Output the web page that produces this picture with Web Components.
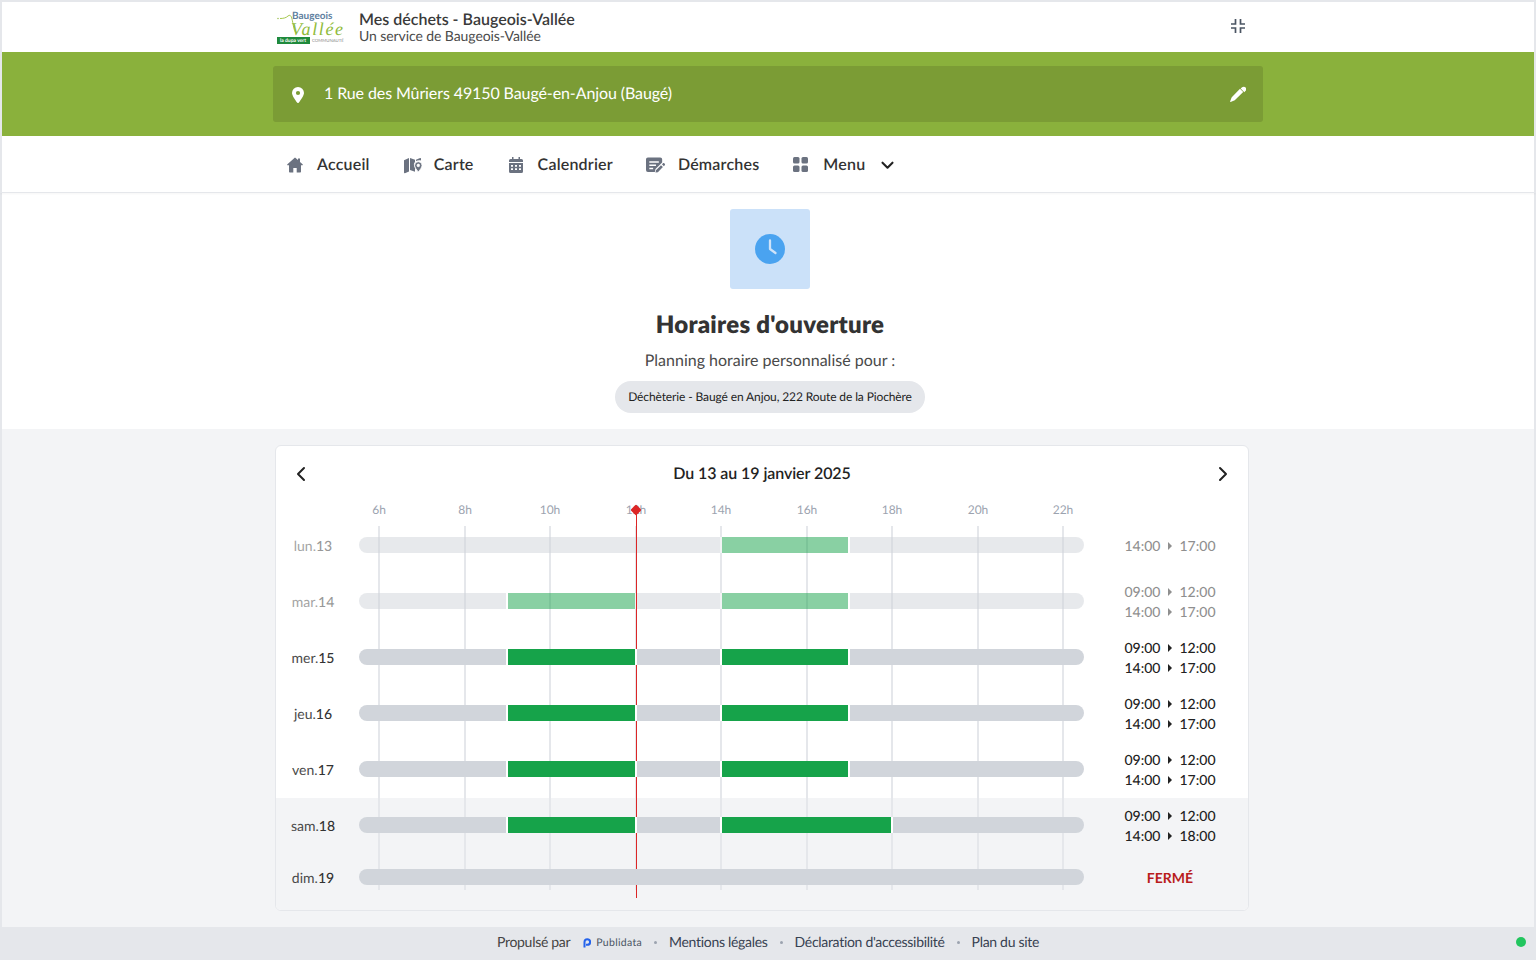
<!DOCTYPE html>
<html lang="fr"><head><meta charset="utf-8"><title>Horaires d'ouverture</title>
<style>
html,body{margin:0;padding:0;height:100%}
body{font-family:Lato,"Liberation Sans",sans-serif;color:#333;background:#f3f4f6;text-rendering:geometricPrecision}
page-shell{display:flex;flex-direction:column;height:960px;overflow:hidden;box-sizing:border-box}
</style></head><body>
<page-shell>
  <app-header></app-header>
  <address-band>1 Rue des Mûriers 49150 Baugé-en-Anjou (Baugé)</address-band>
  <nav-bar></nav-bar>
  <hours-hero></hours-hero>
  <schedule-section></schedule-section>
  <site-footer></site-footer>
</page-shell>
<script>
const ICONS={
 home:'<svg viewBox="0 0 16 16" width="16" height="16"><path fill="currentColor" d="M8 .5 .4 7.200c-.4.4-.2 1 .4 1H2V14.500c0 .6.5 1 1 1H6.300V11h3.400v4.500H13c.6 0 1-.4 1-1V8.200h1.200c.6 0 .8-.6.4-1L13 4.900V1.500h-2v1.600z"/></svg>',
 map:'<svg viewBox="0 0 18 18" width="18" height="18"><path fill="currentColor" d="M0 4.300 5 2v13.600L.9 17.200c-.4.2-.9-.1-.9-.6zM6 2l5 1.700v2.200c-.9.9-1.300 2.100-1 3.300.3 1.200.6 2 1 2.800v3.800l-5-1.700zM12 3.700 16.100 2c.4-.2.900.1.900.6v2c-1.500-.5-3.300-.3-5 .5z"/><path fill-rule="evenodd" fill="currentColor" stroke="#fff" stroke-width=".8" d="M14.300 5.700a3.700 3.700 0 0 1 3.700 3.700c0 1.800-2.200 4.700-3 5.800-.3.4-1 .4-1.300 0-.8-1.100-3.100-4-3.100-5.800a3.700 3.700 0 0 1 3.700-3.700zm0 2.400a1.300 1.300 0 1 0 0 2.600 1.300 1.300 0 0 0 0-2.600z"/></svg>',
 cal:'<svg viewBox="0 0 14 16" width="14" height="16"><path fill-rule="evenodd" fill="currentColor" d="M3 0h1.500v2h5V0H11v2h1.500A1.500 1.500 0 0 1 14 3.500V5H0V3.500A1.500 1.500 0 0 1 1.500 2H3zM0 6h14v8.500a1.500 1.500 0 0 1-1.500 1.500h-11A1.500 1.500 0 0 1 0 14.500zm2 2v1.700h2V8zm4 0v1.700h2V8zm4 0v1.700h2V8zm-8 3.300V13h2v-1.700zm4 0V13h2v-1.700zm4 0V13h2v-1.700z"/></svg>',
 doc:'<svg viewBox="0 0 20 16" width="19" height="16"><path fill-rule="evenodd" fill="currentColor" d="M2 0h13a2 2 0 0 1 2 2v3.300l-7 7-.7 3H2a2 2 0 0 1-2-2V2a2 2 0 0 1 2-2zm1.500 4v1.500h10V4zm0 3.500V9h7V7.500zm0 3.500v1.500h4V11z"/><path fill="currentColor" d="M17.700 6.300c.5-.5 1.200-.5 1.700 0l.3.300c.5.500.5 1.200 0 1.700l-.9.900-2-2zM15.800 8.200l2 2-5.300 5.300-2.500.5.500-2.500z"/></svg>',
 grid:'<svg viewBox="0 0 15 15" width="15" height="15"><g fill="currentColor"><rect width="6.500" height="6.500" rx="1.500"/><rect x="8.500" width="6.500" height="6.500" rx="1.500"/><rect y="8.500" width="6.500" height="6.500" rx="1.500"/><rect x="8.500" y="8.500" width="6.500" height="6.500" rx="1.500"/></g></svg>',
 down:'<svg viewBox="0 0 13 9" width="13" height="9"><path fill="none" stroke="currentColor" stroke-width="2.100" stroke-linecap="round" stroke-linejoin="round" d="M1.500 1.700 6.500 6.700l5-5"/></svg>',
 compress:'<svg viewBox="0 0 14 14" width="14" height="14"><path fill="none" stroke="currentColor" stroke-width="1.700" d="M4.500 0v5H0M9.500 0v5H14M4.500 14V9H0M9.500 14V9H14"/></svg>',
 pin:'<svg viewBox="0 0 12 16" width="12" height="16"><path fill-rule="evenodd" fill="currentColor" d="M6 0a6 6 0 0 1 6 6c0 2.700-3.600 7.500-5.100 9.500a1.100 1.100 0 0 1-1.800 0C3.600 13.500 0 8.700 0 6a6 6 0 0 1 6-6zm0 3.900a2.100 2.100 0 1 0 0 4.200 2.100 2.100 0 0 0 0-4.200z"/></svg>',
 pen:'<svg viewBox="0 0 16 16" width="16" height="16"><path fill="currentColor" d="M11.800 1.500c1.100-1.100 2.800-1.100 3.800-.1 1 1 .9 2.600-.2 3.700l-1.100 1.100-3.600-3.600zM10 2.800l3.200 3.200L5 14c-.4.4-.9.7-1.400.8l-3 1.100c-.3.1-.6-.2-.5-.5l1.100-3c.1-.5.400-1 .8-1.400z"/></svg>',
 left:'<svg viewBox="0 0 10 16" width="10" height="16"><path fill="none" stroke="currentColor" stroke-width="2" stroke-linecap="round" stroke-linejoin="round" d="M8 2 2 8l6 6"/></svg>',
 right:'<svg viewBox="0 0 10 16" width="10" height="16"><path fill="none" stroke="currentColor" stroke-width="2" stroke-linecap="round" stroke-linejoin="round" d="m2 2 6 6-6 6"/></svg>',
 clock:'<svg viewBox="0 0 30 30" width="30" height="30"><circle cx="15" cy="15" r="15" fill="#4aa3f0"/><path fill="none" stroke="#cfe3f9" stroke-width="2.300" stroke-linecap="round" stroke-linejoin="round" d="M15 6.500V15l5.500 4"/></svg>'
};
function def(name,css,html){
  customElements.define(name,class extends HTMLElement{
    constructor(){super();const r=this.attachShadow({mode:'open'});
      r.innerHTML='<style>'+css+'</style>'+(typeof html==='function'?html(this):html);}
  });
}
def('app-header',`
 :host{display:block;background:#fff;border-top:2px solid #e5e7eb;border-left:2px solid #e5e7eb;border-right:2px solid #e5e7eb}
 .in{width:990px;margin:0 auto;height:50px;display:flex;align-items:center;box-sizing:border-box;padding-left:4px}
 svg.logo{width:69px;height:36px;flex:none;margin-right:13px}
 .t{flex:1;color:#333}
 .a{font-size:16px;font-weight:600;line-height:18px;color:#3a3a3a}
 .b{font-size:14px;line-height:14px;color:#4a4a4a;letter-spacing:-.08px}
 .c{color:#4b5563;display:flex;margin:0 18px 2px 0}
`,()=>`<div class="in">
 <svg class="logo" viewBox="0 0 69 36" aria-label="Baugeois-Vallée">
  <circle cx="1" cy="9.500" r=".7" fill="#8fb63a"/>
  <path fill="none" stroke="#9cc23c" stroke-width=".9" d="M3 9.500c3 0 6-.5 8-2.500 3-2.500 4 2 5 8 1 5 2 9 3.500 8"/>
  <text x="15" y="9.500" font-family="Lato,sans-serif" font-size="10" font-weight="700" fill="#5f7f9f">Baugeois</text>
  <text x="14" y="25.500" font-family="'Liberation Serif',serif" font-style="italic" font-size="18" letter-spacing="1.600" fill="#8fbb3a">Vallée</text>
  <rect x="0" y="28" width="33" height="7" fill="#1f8a3c"/>
  <text x="3" y="33.400" font-family="Lato,sans-serif" font-size="5" font-weight="700" fill="#fff">la dupa vert</text>
  <text x="35" y="33.400" font-family="Lato,sans-serif" font-size="4.300" fill="#888">COMMUNAUTÉ</text>
 </svg>
 <div class="t"><div class="a">Mes déchets - Baugeois-Vallée</div><div class="b">Un service de Baugeois-Vallée</div></div>
 <div class="c">${ICONS.compress}</div></div>`);
def('address-band',`
 :host{display:block;background:#8ab13c;padding:14px 0;border-left:2px solid #e5e7eb;border-right:2px solid #e5e7eb}
 .box{width:990px;height:56px;margin:0 auto;background:#7b9c35;border-radius:3px;display:flex;align-items:center;color:#fff;box-sizing:border-box;padding:0 17px 0 19px;font-size:16px}
 .p{display:flex;margin-right:20px;margin-top:1px}.s{flex:1;margin-top:-2px;letter-spacing:-.1px}.e{display:flex}
`,`<div class="box"><span class="p">${ICONS.pin}</span><span class="s"><slot></slot></span><span class="e">${ICONS.pen}</span></div>`);
def('nav-item',`
 :host{display:flex;align-items:center;font-size:16px;font-weight:600;letter-spacing:.2px;color:#333;margin-right:var(--m,34px)}
 .i{display:flex;justify-content:center;color:#6b7280;margin-right:var(--g,14px);margin-top:1px}
 .d{display:flex;margin-left:16px;color:#222;margin-top:2px}
`,h=>`<span class="i">${ICONS[h.getAttribute('icon')]}</span><span class="x"><slot></slot></span>${h.hasAttribute('drop')?`<span class="d">${ICONS.down}</span>`:''}`);
def('nav-bar',`
 :host{display:block;background:#fff;border-left:2px solid #e5e7eb;border-right:2px solid #e5e7eb;border-bottom:1px solid #e5e7eb;box-shadow:0 1px 2px rgba(0,0,0,.04);position:relative}
 .in{width:990px;height:56px;margin:0 auto;display:flex;align-items:center;box-sizing:border-box;padding-left:14px}
`,`<div class="in"><nav-item icon="home">Accueil</nav-item><nav-item icon="map" style="--g:12px;--m:35px">Carte</nav-item><nav-item icon="cal" style="--g:15px;--m:33px">Calendrier</nav-item><nav-item icon="doc" style="--g:13px">Démarches</nav-item><nav-item icon="grid" drop style="--g:15px">Menu</nav-item></div>`);
def('hours-hero',`
 :host{display:flex;flex-direction:column;align-items:center;background:#fff;padding:16px 0 16px 4px;border-left:2px solid #e5e7eb;border-right:2px solid #e5e7eb}
 .ic{width:80px;height:80px;background:#cbe1f9;border-radius:3px;display:flex;align-items:center;justify-content:center}
 h1{margin:20px 0 0;font-size:24px;line-height:32px;font-weight:800;letter-spacing:.25px;color:#333}
 p{margin:10px 0 0;font-size:16px;line-height:20px;color:#4a4a4a}
 .chip{margin-top:10px;height:32px;padding:0 13px;border-radius:16px;background:#e5e7eb;display:flex;align-items:center;font-size:12px;color:#222;letter-spacing:-.115px}
 .chip span{margin-top:-2px}
`,`<div class="ic">${ICONS.clock}</div><h1>Horaires d'ouverture</h1><p>Planning horaire personnalisé pour :</p><div class="chip"><span>Déchèterie - Baugé en Anjou, 222 Route de la Piochère</span></div>`);
const X=h=>379+(h-6)*42.75;
const START={9:508,14:722},END={12:635,17:848,18:891};
def('schedule-row',`
 :host{display:flex;align-items:center;height:var(--h,56px);box-sizing:border-box;font-size:14px}
 :host([past]) .w{opacity:.5}
 .w{display:flex;align-items:center;flex:1;height:100%;color:#222}
 .day{width:74px;text-align:center;margin-right:9px;color:#4a4a4a;flex:none}
 .day b{font-weight:500;color:#333}
 .bar{width:725px;height:16px;flex:none;display:flex;border-radius:8px;overflow:hidden;position:relative;z-index:1}
 .g{background:#d1d5db;flex:none}.g:last-child{flex:1}
 .o{background:#16a34a;flex:none}
 .gap{background:#fff;flex:none;width:2px}
 .h{flex:1;padding-left:8px;margin-top:2px;display:flex;flex-direction:column;align-items:center;line-height:20px;font-weight:500;color:#222}
 .l{display:flex;align-items:center}
 .l i{display:block;width:0;height:0;border-left:4.500px solid currentColor;border-top:4px solid transparent;border-bottom:4px solid transparent;margin:0 7.500px 0 7.500px}
 .f{color:#b91c1c;font-weight:700}
`,h=>{
  const segs=(h.getAttribute('segs')||'').split(',').filter(Boolean).map(s=>s.split('-').map(Number));
  let out='',cur=359;
  for(const [a,b] of segs){
    out+=`<span class="g" style="width:${START[a]-2-cur}px"></span><span class="gap"></span><span class="o" style="width:${END[b]-START[a]}px"></span><span class="gap"></span>`;
    cur=END[b]+2;
  }
  out+='<span class="g"></span>';
  const hours=h.getAttribute('hours');
  const right=hours?hours.split(',').map(s=>{const [a,b]=s.split('-');return `<div class="l">${a}<i></i>${b}</div>`}).join(''):'<div class="f">FERMÉ</div>';
  const d=h.getAttribute('day').split('.');
  return `<div class="w"><div class="day">${d[0]}.<b>${d[1]}</b></div><div class="bar">${out}</div><div class="h">${right}</div></div>`;
});
def('schedule-section',`
 :host{display:block;flex:1;background:#f3f4f6;padding:16px 0 0 273px;border-left:2px solid #e5e7eb;border-right:2px solid #e5e7eb;box-sizing:border-box;min-height:0}
 .card{width:974px;height:466px;box-sizing:border-box;border:1px solid #e5e7eb;border-radius:6px;background:#fff;overflow:hidden;position:relative}
 .head{display:flex;align-items:center;justify-content:space-between;height:56px;padding:0 20px 0 20px;font-size:16px;font-weight:600;color:#222;box-sizing:border-box}
 .head span{display:flex}
 .head b{font-weight:600;margin-top:-2px;letter-spacing:-.08px}
 .scale{height:16px;position:relative;font-size:12px;color:#9ca3af}
 .scale s{position:absolute;top:0;transform:translateX(-50%);text-decoration:none;line-height:16px}
 .band{position:absolute;left:0;right:0;top:352px;bottom:0;background:#f3f4f6}
 .lines{position:absolute;left:0;right:0;top:80px;height:364px}
 .lines i{position:absolute;top:0;bottom:0;width:2px;margin-left:-1px;background:#e5e7eb}
 .rows{position:absolute;left:0;right:0;top:71px;bottom:0;display:flex;flex-direction:column}
 .now{position:absolute;left:360px;top:64px;width:1px;height:388px;background:#dc2626}
 .now::before{content:"";position:absolute;left:-4px;top:-4px;width:8px;height:8px;background:#dc2626;border-radius:1.500px;transform:rotate(45deg)}
`,()=>{
  let sc='',ln='';
  for(let t=6;t<=22;t+=2){const x=Math.round(X(t))-276;sc+=`<s style="left:${x}px">${t}h</s>`;ln+=`<i style="left:${x}px"></i>`;}
  return `<div class="card"><div class="head"><span>${ICONS.left}</span><b>Du 13 au 19 janvier 2025</b><span>${ICONS.right}</span></div>
  <div class="scale">${sc}</div><div class="band"></div><div class="lines">${ln}</div>
  <div class="rows">
   <schedule-row past day="lun.13" segs="14-17" hours="14:00-17:00"></schedule-row>
   <schedule-row past day="mar.14" segs="9-12,14-17" hours="09:00-12:00,14:00-17:00"></schedule-row>
   <schedule-row day="mer.15" segs="9-12,14-17" hours="09:00-12:00,14:00-17:00"></schedule-row>
   <schedule-row day="jeu.16" segs="9-12,14-17" hours="09:00-12:00,14:00-17:00"></schedule-row>
   <schedule-row day="ven.17" segs="9-12,14-17" hours="09:00-12:00,14:00-17:00"></schedule-row>
   <schedule-row day="sam.18" segs="9-12,14-18" hours="09:00-12:00,14:00-18:00"></schedule-row>
   <schedule-row day="dim.19" style="--h:48px"></schedule-row>
  </div><div class="now"></div></div>`;
});
def('site-footer',`
 :host{display:block;background:#e5e7eb;height:33px;flex:none;position:relative}
 .in{height:28px;display:flex;align-items:center;justify-content:center;font-size:14px;color:#374151;letter-spacing:-.3px}
 .pr{color:#444}
 .pub{display:flex;align-items:center;font-size:10.500px;letter-spacing:.3px;color:#4b5563;margin-left:13px;padding-top:3px}
 .pub svg{margin-right:5px}
 .sep{width:3px;height:3px;border-radius:50%;background:#9ca3af;margin:2px 12px 0}
 .dot{position:absolute;right:10px;top:10px;width:10px;height:10px;border-radius:50%;background:#22c55e}
`,`<div class="in"><span class="pr">Propulsé par</span><span class="pub"><svg viewBox="0 0 8 10" width="8" height="10"><path fill="none" stroke="#2563eb" stroke-width="2" d="M1.500 9.500V4a2.800 2.800 0 1 1 2.800 2.800H3"/></svg>Publidata</span><span class="sep"></span><span>Mentions légales</span><span class="sep"></span><span>Déclaration d'accessibilité</span><span class="sep"></span><span>Plan du site</span></div><div class="dot"></div>`);
</script>
</body></html>
